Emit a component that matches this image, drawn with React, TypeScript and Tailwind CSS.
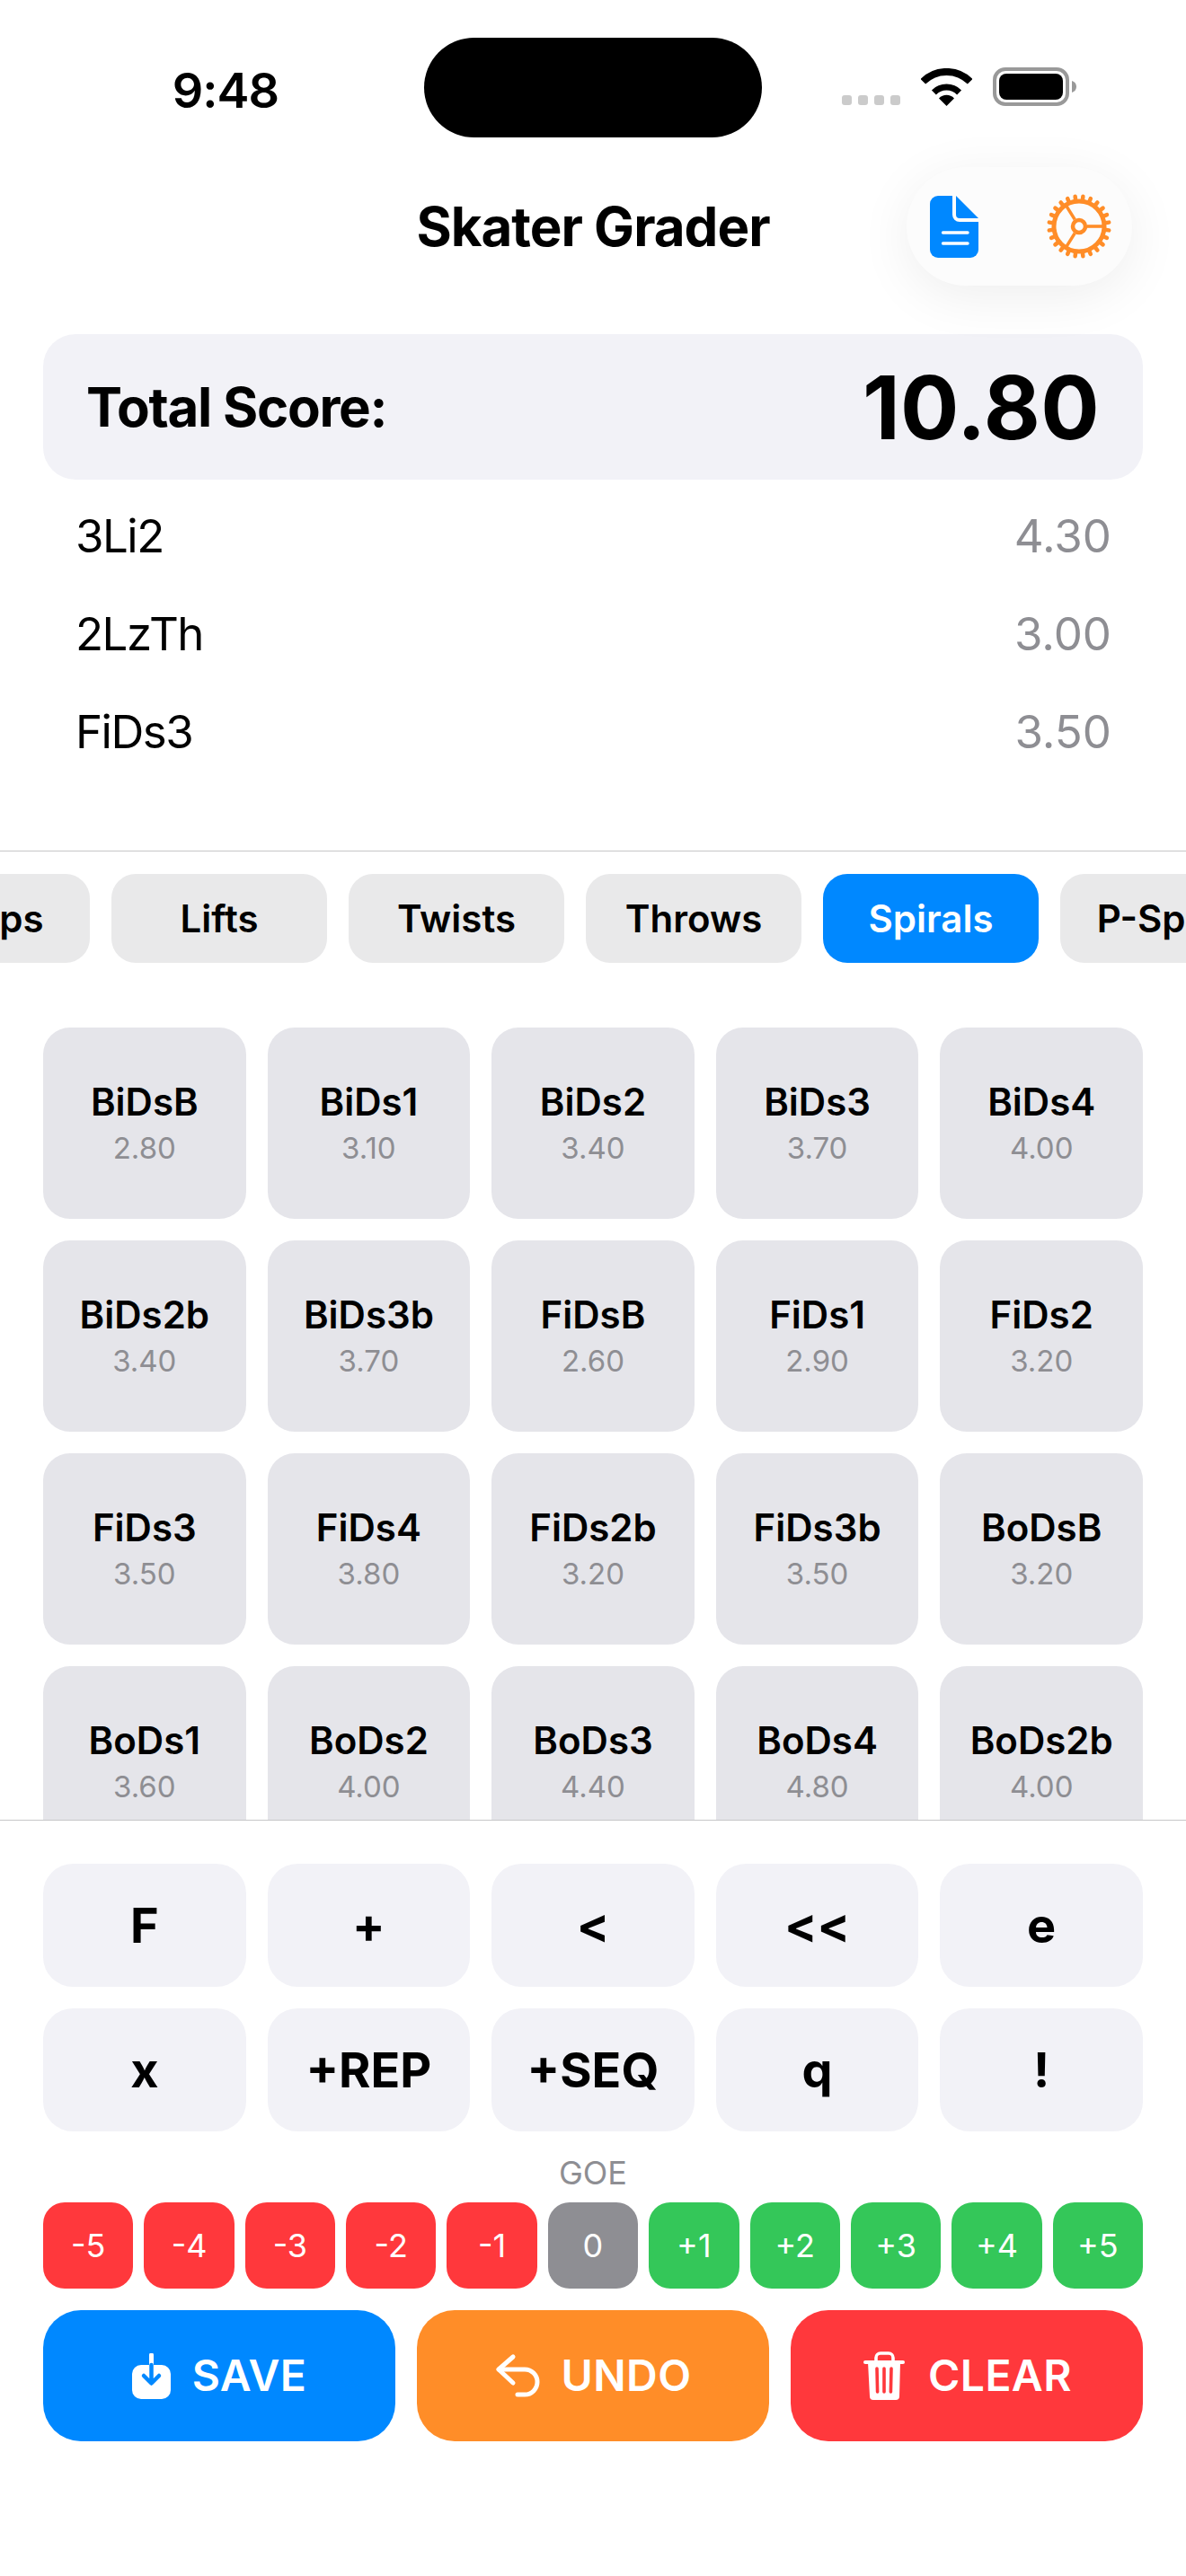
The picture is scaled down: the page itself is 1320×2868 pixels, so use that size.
const categories = ["Jumps", "Lifts", "Twists", "Throws", "Spirals", "P-Spins"];

const elements: [string, string][] = [
  ["BiDsB", "2.80"], ["BiDs1", "3.10"], ["BiDs2", "3.40"], ["BiDs3", "3.70"], ["BiDs4", "4.00"],
  ["BiDs2b", "3.40"], ["BiDs3b", "3.70"], ["FiDsB", "2.60"], ["FiDs1", "2.90"], ["FiDs2", "3.20"],
  ["FiDs3", "3.50"], ["FiDs4", "3.80"], ["FiDs2b", "3.20"], ["FiDs3b", "3.50"], ["BoDsB", "3.20"],
  ["BoDs1", "3.60"], ["BoDs2", "4.00"], ["BoDs3", "4.40"], ["BoDs4", "4.80"], ["BoDs2b", "4.00"],
];

const scoredRows = [
  ["3Li2", "4.30"],
  ["2LzTh", "3.00"],
  ["FiDs3", "3.50"],
];

const modifiers = ["F", "+", "<", "<<", "e", "x", "+REP", "+SEQ", "q", "!"];

const goeValues = ["-5", "-4", "-3", "-2", "-1", "0", "+1", "+2", "+3", "+4", "+5"];

const goeColor = (v: string) => {
  if (v === "0") return "bg-[#8e8e93]";
  return v.startsWith("-") ? "bg-[#ff383c]" : "bg-[#34c759]";
};

const WifiIcon = () => (
  <svg width="57" height="42" viewBox="0 0 57 42" fill="none">
    <path d="M2.3 14.8 A37 37 0 0 1 54.7 14.8" stroke="#000" strokeWidth="8" />
    <path d="M14.4 26.9 A20 20 0 0 1 42.6 26.9" stroke="#000" strokeWidth="7" />
    <path d="M28.5 42 L20 33.4 A12 12 0 0 1 37 33.4 Z" fill="#000" />
  </svg>
);

const BatteryIcon = () => (
  <svg width="93" height="43" viewBox="0 0 93 43" fill="none">
    <rect x="2" y="2" width="81" height="39" rx="12" stroke="#999" strokeWidth="4" />
    <rect x="7" y="7" width="71" height="29" rx="8" fill="#000" />
    <path d="M88 15 C91 16 93 18 93 21.5 C93 25 91 27 88 28 Z" fill="#999" />
  </svg>
);

const DocIcon = () => (
  <svg width="54" height="69" viewBox="0 0 54 69" fill="none">
    <path d="M9 0 H29 L54 25 V60 A9 9 0 0 1 45 69 H9 A9 9 0 0 1 0 60 V9 A9 9 0 0 1 9 0 Z" fill="#0088ff" />
    <path d="M27 0 V21 A6 6 0 0 0 33 27 H54" stroke="#fcfcfc" strokeWidth="4" />
    <path d="M14.5 41 H42" stroke="#fff" strokeWidth="3.4" strokeLinecap="round" />
    <path d="M14.5 53 H42" stroke="#fff" strokeWidth="3.4" strokeLinecap="round" />
  </svg>
);

const GearIcon = () => {
  const teeth = Array.from({ length: 24 }, (_, i) => i * 15);
  return (
    <svg width="72" height="72" viewBox="-36 -36 72 72" fill="none" stroke="#ff8d28">
      <circle r="28" strokeWidth="5" />
      {teeth.map((deg) => (
        <path key={deg} d="M29 0 H33.5" strokeWidth="4.5" strokeLinecap="round" transform={`rotate(${deg + 7.5})`} />
      ))}
      <circle r="7" strokeWidth="4.5" />
      <path d="M9 0 H27" strokeWidth="3.6" />
      <path d="M9 0 H27" strokeWidth="3.6" transform="rotate(122)" />
      <path d="M9 0 H27" strokeWidth="3.6" transform="rotate(238)" />
    </svg>
  );
};

const SaveIcon = () => (
  <svg width="43" height="51" viewBox="0 0 43 51" fill="none">
    <rect x="0" y="13" width="43" height="38" rx="10" fill="#fff" />
    <path d="M21.5 2 V13" stroke="#fff" strokeWidth="5" strokeLinecap="round" />
    <path d="M21.5 13 V33 M13 25 L21.5 33.5 L30 25" stroke="#0088ff" strokeWidth="4.5" strokeLinecap="round" strokeLinejoin="round" />
  </svg>
);

const UndoIcon = () => (
  <svg width="50" height="50" viewBox="0 0 50 50" fill="none" stroke="#fff" strokeWidth="5" strokeLinecap="round" strokeLinejoin="round">
    <path d="M20 4 L4 18 L20 33" />
    <path d="M4 18 H33 A14 14 0 0 1 33 46 H25" />
  </svg>
);

const TrashIcon = () => (
  <svg width="50" height="57" viewBox="0 0 50 57" fill="none">
    <path d="M16 13 V8 A5 5 0 0 1 21 3 H30 A5 5 0 0 1 35 8 V13" stroke="#fff" strokeWidth="3.6" />
    <path d="M4 13 H46" stroke="#fff" strokeWidth="4" strokeLinecap="round" />
    <path d="M7 13 L9 51 A4 4 0 0 0 13 55 H38 A4 4 0 0 0 42 51 L43 13 Z" fill="#fff" />
    <path d="M17 20 L17.6 46 M25 20 V46 M33 20 L32.4 46" stroke="#ff383c" strokeWidth="3.6" strokeLinecap="round" />
  </svg>
);

const actions = [
  { label: "SAVE", icon: <SaveIcon />, color: "bg-[#0088ff]" },
  { label: "UNDO", icon: <UndoIcon />, color: "bg-[#ff8d28]" },
  { label: "CLEAR", icon: <TrashIcon />, color: "bg-[#ff383c]" },
];

export default function App() {
  return (
    <div className="w-[1320px] h-[2868px] overflow-hidden bg-white text-black [font-family:Inter,sans-serif]">
      {/* Status bar */}
      <div className="h-[186px] pt-[42px] flex items-start">
        <div className="w-[472px] h-[111px] flex items-center justify-end pr-[162px] pt-[6px]">
          <span className="text-[54px] font-semibold leading-none tracking-[-1px]">9:48</span>
        </div>
        <div className="w-[376px] h-[111px] rounded-full bg-black" />
        <div className="flex-1 flex items-end gap-[23px] pl-[89px] pt-[33px]">
          <div className="flex gap-[7px] pb-[1px]">
            {[0, 1, 2, 3].map((i) => (
              <span key={i} className="w-[11px] h-[11px] rounded-[3px] bg-[#cbcbcb]" />
            ))}
          </div>
          <WifiIcon />
          <BatteryIcon />
        </div>
      </div>

      {/* Title + toolbar */}
      <div className="h-[132px] grid grid-cols-[1fr_auto_1fr] items-center">
        <div />
        <h1 className="text-[60px] font-bold leading-none tracking-[-1px]">Skater Grader</h1>
        <div className="flex justify-end pr-[60px]">
          <div className="w-[251px] h-[132px] rounded-full bg-[#fcfcfc] shadow-[0_12px_60px_rgba(0,0,0,0.07)] flex items-center pl-[26px] pr-[23px] justify-between">
            <DocIcon />
            <GearIcon />
          </div>
        </div>
      </div>

      {/* Total */}
      <div className="mt-[54px] mx-[48px] h-[162px] rounded-[36px] bg-[#f2f2f7] flex items-center justify-between pl-[48px] pr-[48px]">
        <span className="text-[60px] font-bold leading-none tracking-[-1.3px]">Total Score:</span>
        <span className="text-[97px] font-bold leading-none tracking-[0.3px]">10.80</span>
      </div>

      {/* Scored elements */}
      <div className="h-[413px] pt-[8px] pl-[84px] pr-[83px]">
        {scoredRows.map(([name, value]) => (
          <div key={name} className="h-[109px] flex items-center justify-between text-[51px] leading-none">
            <span className="tracking-[-1.5px]">{name}</span>
            <span className="text-[#8e8e93]">{value}</span>
          </div>
        ))}
      </div>

      {/* Elements picker */}
      <div className="h-[1080px] overflow-hidden border-y border-[#c6c6c8]">
        <div className="flex gap-[24px] -ml-[140px] pt-[25px]">
          {categories.map((c) => (
            <div
              key={c}
              className={`w-[240px] h-[99px] shrink-0 rounded-[27px] flex items-center justify-center text-[42px] font-[590] ${
                c === "Spirals" ? "bg-[#0088ff] text-white" : "bg-[#e9e9ea]"
              }`}
            >
              {c}
            </div>
          ))}
        </div>
        <div className="mt-[72px] mx-[48px] grid grid-cols-5 gap-x-[24px] gap-y-[24px]">
          {elements.map(([code, base]) => (
            <div key={code} className="h-[213px] rounded-[30px] bg-[#e5e5ea] flex flex-col items-center justify-center pb-[2px]">
              <span className="text-[42px] font-[590] leading-[50px]">{code}</span>
              <span className="mt-[6px] text-[33px] leading-[40px] text-[#8e8e93]">{base}</span>
            </div>
          ))}
        </div>
      </div>

      {/* Modifiers, GOE, actions */}
      <div className="px-[48px] pt-[48px]">
        <div className="grid grid-cols-5 gap-x-[24px] gap-y-[24px]">
          {modifiers.map((m) => (
            <div key={m} className="h-[137px] rounded-[33px] bg-[#f2f2f7] flex items-center justify-center text-[54px] font-bold">
              {m}
            </div>
          ))}
        </div>
        <div className="mt-[24px] text-center text-[36px] leading-[44px] text-[#8e8e93]">GOE</div>
        <div className="mt-[11px] flex gap-[12px]">
          {goeValues.map((v) => (
            <div key={v} className={`flex-1 h-[96px] rounded-[24px] flex items-center justify-center text-[36px] text-white ${goeColor(v)}`}>
              {v}
            </div>
          ))}
        </div>
        <div className="mt-[24px] grid grid-cols-3 gap-[24px]">
          {actions.map((a) => (
            <div key={a.label} className={`h-[146px] rounded-[42px] flex items-center justify-center gap-[24px] text-white text-[48px] font-[590] tracking-[0.4px] ${a.color}`}>
              {a.icon}
              <span>{a.label}</span>
            </div>
          ))}
        </div>
      </div>
    </div>
  );
}
